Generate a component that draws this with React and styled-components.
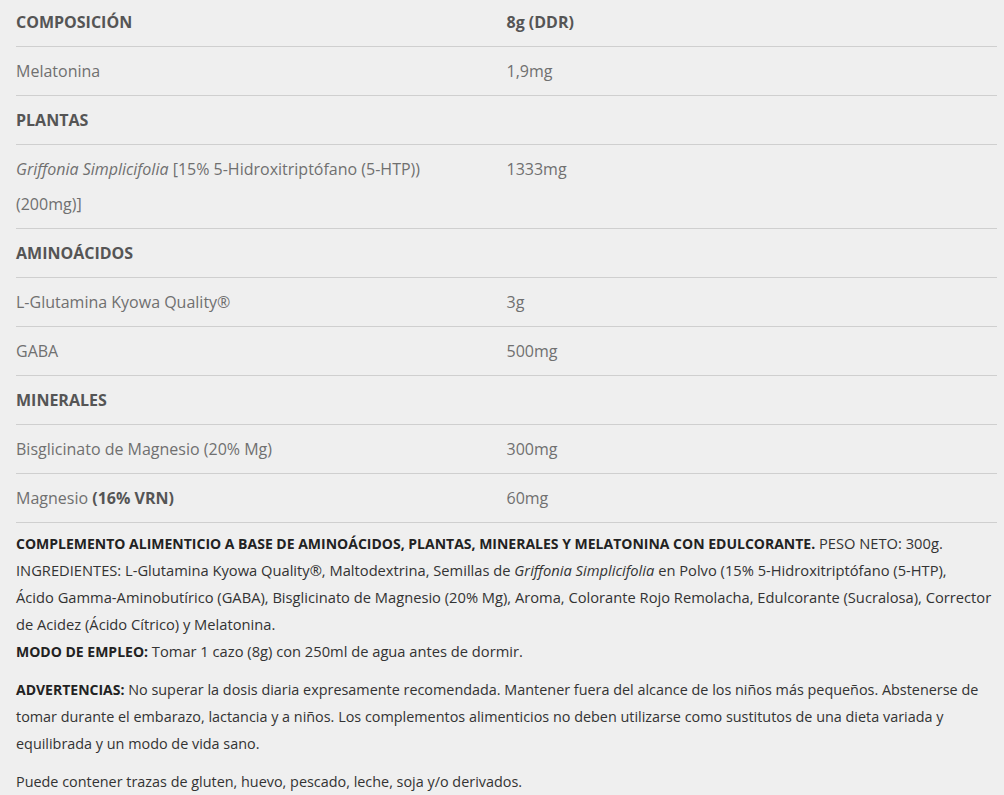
import styled, { createGlobalStyle } from "styled-components";

const GlobalStyle = createGlobalStyle`
    body {
        margin: 0;
        background: #efefef;
        font-family: "Open Sans", "Liberation Sans", sans-serif;
    }
`;

const rows = [
    { type: "head", name: "COMPOSICIÓN", value: "8g (DDR)" },
    { name: "Melatonina", value: "1,9mg" },
    { type: "head", name: "PLANTAS" },
    {
        name: (
            <>
                <em>Griffonia Simplicifolia</em> [15% 5-Hidroxitriptófano (5-HTP))
                (200mg)]
            </>
        ),
        value: "1333mg",
    },
    { type: "head", name: "AMINOÁCIDOS" },
    { name: "L-Glutamina Kyowa Quality®", value: "3g" },
    { name: "GABA", value: "500mg" },
    { type: "head", name: "MINERALES" },
    { name: "Bisglicinato de Magnesio (20% Mg)", value: "300mg" },
    {
        name: (
            <>
                Magnesio <b>(16% VRN)</b>
            </>
        ),
        value: "60mg",
    },
];

export default function App() {
    return (
        <Page>
            <GlobalStyle />
            <Table>
                <tbody>
                    {rows.map((row, i) => (
                        <Row key={i}>
                            <Cell $head={row.type === "head"}>{row.name}</Cell>
                            <Cell $head={row.type === "head"}>{row.value}</Cell>
                        </Row>
                    ))}
                </tbody>
            </Table>

            <Text $size={14.7}>
                <b>
                    COMPLEMENTO ALIMENTICIO A BASE DE AMINOÁCIDOS, PLANTAS, MINERALES Y
                    MELATONINA CON EDULCORANTE.
                </b>{" "}
                PESO NETO: 300g.
                <br />
                INGREDIENTES: L-Glutamina Kyowa Quality®, Maltodextrina, Semillas de{" "}
                <em>Griffonia Simplicifolia</em> en Polvo (15% 5-Hidroxitriptófano
                (5-HTP),
                <br />
                Ácido Gamma-Aminobutírico (GABA), Bisglicinato de Magnesio (20% Mg),
                Aroma, Colorante Rojo Remolacha, Edulcorante (Sucralosa), Corrector de
                Acidez (Ácido Cítrico) y Melatonina.
                <br />
                <b>MODO DE EMPLEO:</b> Tomar 1 cazo (8g) con 250ml de agua antes de
                dormir.
            </Text>
            <Text $size={14.4}>
                <b>ADVERTENCIAS:</b> No superar la dosis diaria expresamente recomendada.
                Mantener fuera del alcance de los niños más pequeños. Abstenerse de
                tomar durante el embarazo, lactancia y a niños. Los complementos
                alimenticios no deben utilizarse como sustitutos de una dieta variada y
                equilibrada y un modo de vida sano.
            </Text>
            <Text $size={14.4}>
                Puede contener trazas de gluten, huevo, pescado, leche, soja y/o derivados.
            </Text>
        </Page>
    );
}

const Page = styled.div`
    padding: 0 4px 0 16px;
    color: #333;
`;

const Table = styled.table`
    width: calc(100% - 3px);
    border-collapse: collapse;
    font-size: 16px;
    margin-top: -2px;
`;

const Row = styled.tr`
    border-bottom: 1px solid #cfcfcf;
`;

const Cell = styled.td`
    width: 50%;
    padding: 7px 24px 6px 0;
    line-height: 35px;
    vertical-align: top;
    color: ${(p) => (p.$head ? "#555" : "#707070")};
    font-weight: ${(p) => (p.$head ? 700 : 400)};

    b {
        color: #555;
    }
`;

const Text = styled.p`
    margin: 7px 0 11px;
    font-size: ${(p) => p.$size}px;
    line-height: 27px;
    color: #333;

    b {
        font-size: 14px;
        color: #222;
    }
`;
